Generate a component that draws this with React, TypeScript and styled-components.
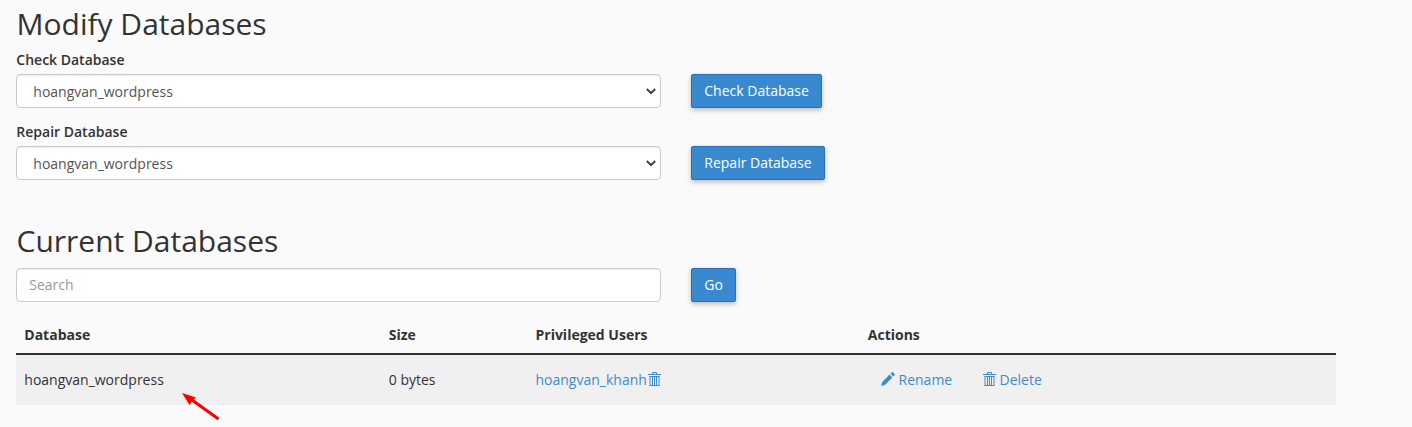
import React from 'react';
import styled, { createGlobalStyle } from 'styled-components';

const Global = createGlobalStyle`
  * { box-sizing: border-box; }
  body { margin: 0; background: #fafafa; color: #333; font: 14px/20px "Open Sans", sans-serif; }
`;
const Page = styled.main`width: 1352px; height: 427px; padding: 7px 16px 0; overflow: hidden; position: relative;`;
const Title = styled.h2<{ $top?: number; $bottom?: number }>`
  margin: ${p => p.$top || 0}px 0 ${p => p.$bottom || 10}px 0.5px;
  font-size: 30px; line-height: 33px; font-weight: 400;
`;
const Label = styled.label`display: block; font-weight: 600; line-height: 20px; margin: 0 0 4px 0.3px;`;
const Row = styled.div<{ $bottom?: number }>`display: flex; gap: 30px; height: 34px; margin-bottom: ${p => p.$bottom || 0}px;`;
const SelectBox = styled.div`
  position: relative; width: 645px; height: 34px;
  svg { position: absolute; right: 5px; top: 14px; pointer-events: none; }
`;
const NativeSelect = styled.select`
  appearance: none; width: 100%; height: 34px; padding: 7px 20px 5px 16.3px; border: 1px solid #ccc; border-radius: 4px;
  background: #fff; color: #555; font: 14px/20px "Open Sans", sans-serif; box-shadow: inset 0 1px 1px rgba(0,0,0,.075);
`;
const Input = styled.input`
  width: 645px; height: 34px; padding: 5px 12px 7px 12.3px; border: 1px solid #ccc; border-radius: 4px;
  background: #fff; font: 14px/20px "Open Sans", sans-serif; box-shadow: inset 0 1px 1px rgba(0,0,0,.075);
  &::placeholder { color: #999; }
`;
const Button = styled.button`
  height: 34px; padding: 6px 12.3px; border: 1px solid #2a6fb3; border-radius: 2px; background: #3889cf; color: #fff;
  font: 14px/20px "Open Sans", sans-serif; box-shadow: 0 2px 5px rgba(0,0,0,.26);
`;
const Table = styled.div`width: 1320px; margin-top: 14px;`;
const Line = styled.div<{ $head?: boolean }>`
  display: grid; grid-template-columns: 364.5px 146.7px 332.3px 1fr; align-items: center; padding: 0 8.3px;
  height: ${p => (p.$head ? 39 : 50)}px; font-weight: ${p => (p.$head ? 700 : 400)};
  border-bottom: ${p => (p.$head ? '2px solid #333' : '0')}; background: ${p => (p.$head ? 'transparent' : '#f0f0f0')};
`;
const Link = styled.a`
  color: #428bca; display: inline-flex; align-items: center;
  svg { flex: none; position: relative; top: -1px; }
`;
const User = styled(Link)`svg { margin-left: 1px; }`;
const Actions = styled.div`display: flex; gap: 30.7px; padding-left: 13.1px;`;
const Arrow = styled.svg`position: absolute; left: 178px; top: 388px;`;

const Select = ({ value }: { value: string }) => (
  <SelectBox>
    <NativeSelect><option>{value}</option></NativeSelect>
    <svg width="10" height="7" viewBox="0 0 10 7" fill="none" stroke="#444" strokeWidth="2">
      <path d="M.8 1L5 5L9.2 1" />
    </svg>
  </SelectBox>
);
const Trash = () => (
  <svg width="13" height="16" viewBox="0 0 13 16" fill="none" stroke="currentColor">
    <path d="M0 3.5h13M4.5 3V1.5h4V3M1.5 5.5h10M2 5.5V14.5M11 5.5V14.5M1.5 14.5h10" />
    <path d="M4.5 6v8M6.5 6v8M8.5 6v8" />
  </svg>
);
const Pencil = () => (
  <svg width="14" height="14" viewBox="0 0 14 14" fill="currentColor">
    <path d="M0 14l1.200-3.900L8.600 2.600l2.800 2.800L3.900 12.900zM9.500 1.700L10.900.3q.5-.4 1 0l1.800 1.800q.4.5 0 1l-1.400 1.400z" />
  </svg>
);

export default function App() {
  return (
    <><Global />
      <Page>
        <Title>Modify Databases</Title>
        <Label>Check Database</Label>
        <Row $bottom={14}><Select value="hoangvan_wordpress" /><Button>Check Database</Button></Row>
        <Label>Repair Database</Label>
        <Row><Select value="hoangvan_wordpress" /><Button>Repair Database</Button></Row>
        <Title $top={44} $bottom={11}>Current Databases</Title>
        <Row><Input placeholder="Search" /><Button>Go</Button></Row>
        <Table>
          <Line $head><span>Database</span><span>Size</span><span>Privileged Users</span><span>Actions</span></Line>
          <Line>
            <span>hoangvan_wordpress</span><span>0 bytes</span><span><User>hoangvan_khanh<Trash /></User></span>
            <Actions><Link><Pencil />&nbsp;Rename</Link><Link><Trash />&nbsp;Delete</Link></Actions>
          </Line>
        </Table>
        <Arrow width="44" height="36" viewBox="0 0 44 36">
          <path d="M14 12L40.5 31" stroke="#f00" strokeWidth="3" />
          <path d="M4 5l14 4.500-3.500 3-3 4.500z" fill="#f00" />
        </Arrow>
      </Page>
    </>
  );
}
